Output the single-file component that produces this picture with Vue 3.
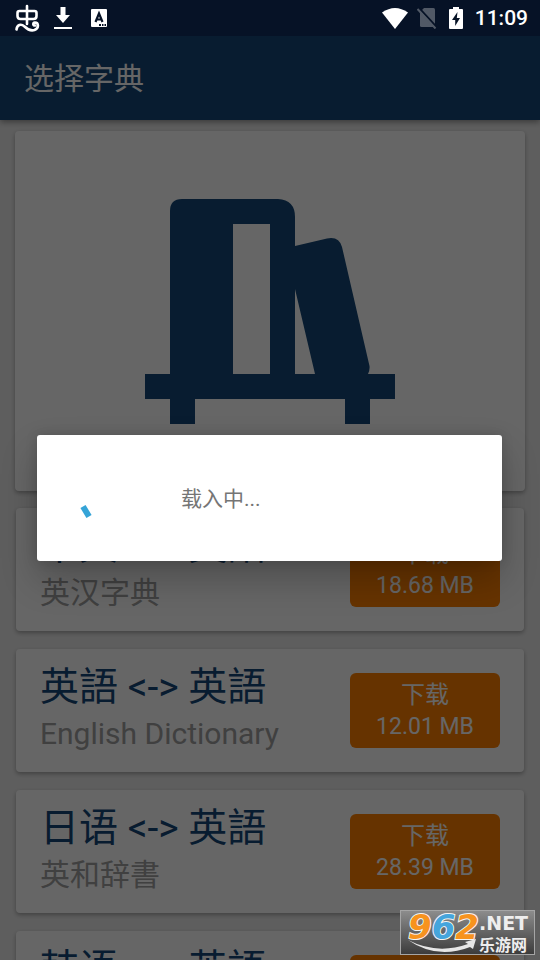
<script setup>
const dictionaries = [
  { pair: '中文 <-> 英語', name: '英汉字典', size: '18.68 MB' },
  { pair: '英語 <-> 英語', name: 'English Dictionary', size: '12.01 MB' },
  { pair: '日语 <-> 英語', name: '英和辞書', size: '28.39 MB' },
  { pair: '韩语 <-> 英語', name: '', size: '' }
]
</script>

<template>
  <div class="screen">
    <div class="status">
      <svg class="worm" width="26" height="28" viewBox="0 0 26 28" fill="none" stroke="#fff" stroke-width="2.6" stroke-linecap="round">
        <path d="M13 2V20M5.500 7H20.500Q22.500 7 22.500 9V12Q22.500 15 19.500 15H6.500Q3.500 15 3.500 12V9Q3.500 7 5.500 7Z" />
        <path d="M2.500 25.500C3 20.500 7 19.500 10.500 22.500C14 26 17 27 20.500 26C25.500 24 24.500 18.500 21 18.500C18.500 18.800 19 22 21 21.500" />
      </svg>
      <svg class="down" width="18" height="24" viewBox="0 0 18 24" fill="#fff">
        <path d="M6.500 1H11.500V9H16L9 17L2 9H6.500ZM0 21H18V23H0Z" />
      </svg>
      <svg class="lang" width="16" height="18" viewBox="0 0 16 18">
        <rect width="16" height="18" rx="1" fill="#fff" />
        <path d="M4.500 13L8 4.500L11.500 13M6 10.500H10" fill="none" stroke="#061226" stroke-width="2.200" />
        <path d="M8 15H10V17H8ZM11 15H12.500V17H11ZM13.500 15H15V17H13.500Z" fill="#061226" />
      </svg>
      <span class="grow"></span>
      <svg class="wifi" width="26" height="21" viewBox="0 0 26 21" fill="#fff">
        <path d="M0 4.500Q13 -4.500 26 4.500L13 21Z" />
      </svg>
      <svg class="sim" width="20" height="22" viewBox="0 0 20 22">
        <path d="M7 1H16.500Q18 1 18 2.500V18.500Q18 20 16.500 20H4.500Q3 20 3 18.500V5Z" fill="#515966" />
        <path d="M2 1L20 20.500" stroke="#061226" stroke-width="2" />
        <path d="M0.500 2L18.500 21.500" stroke="#515966" stroke-width="2" />
      </svg>
      <svg class="battery" width="14" height="22" viewBox="0 0 14 22">
        <path d="M4 0H10V2H13Q14 2 14 3V21Q14 22 13 22H1Q0 22 0 21V3Q0 2 1 2H4Z" fill="#fff" />
        <path d="M8.500 5L3 13H6.200V19L11 11H7.800Z" fill="#061226" />
      </svg>
      <span class="clock">11:09</span>
    </div>

    <header class="bar"><h1>选择字典</h1></header>

    <main class="content">
      <section class="hero">
        <svg width="250" height="225" viewBox="0 0 250 225" fill="#144878" fill-rule="evenodd">
          <path d="M25 175V12Q25 0 37 0H133Q150 1 150 18V47L182 39.500Q194 37 197 48L224.500 167Q225 171 223 175H250V200H225V225H200V200H50V225H25V200H0V175ZM88 25V175H125V25ZM150 90V175H170Z" />
        </svg>
      </section>
      <article v-for="d in dictionaries" :key="d.pair" class="row">
        <div class="info">
          <h2>{{ d.pair }}</h2>
          <p>{{ d.name }}</p>
        </div>
        <button type="button" :aria-label="d.pair">
          <template v-if="d.size"><span>下载</span><span class="size">{{ d.size }}</span></template>
        </button>
      </article>
    </main>

    <div class="overlay">
      <div class="dialog" role="dialog">
        <svg width="72" height="72" viewBox="0 0 72 72" fill="none">
          <path d="M13 44.500L19 54.500" stroke="#35a4d7" stroke-width="6" />
        </svg>
        <p>载入中...</p>
      </div>
    </div>

    <div class="mark">
      <div class="digits"><span>9</span><span class="blue">6</span><span>2</span></div>
      <div class="site"><span class="net">.NET</span><span class="cn">乐游网</span></div>
      <svg class="swoosh" width="70" height="14" viewBox="0 0 70 14">
        <path d="M0 1Q29 16 60 5L57 3L68 0L65 10L62 8Q29 21 0 1Z" fill="#e6e6e6" />
      </svg>
    </div>
  </div>
</template>

<style>
body {
  margin: 0;
  background: #ebebeb;
}
</style>

<style scoped>
.screen {
  position: relative;
  display: flex;
  flex-direction: column;
  height: 100vh;
  overflow: hidden;
  background: #ebebeb;
  font-family: Roboto, "Noto Sans CJK SC", sans-serif;
}
h1, h2, p {
  margin: 0;
  font-weight: 400;
}
.status {
  position: relative;
  z-index: 3;
  display: flex;
  flex: none;
  align-items: center;
  box-sizing: border-box;
  height: 36px;
  padding: 0 12px 0 14px;
  background: #061226;
}
.down { margin-left: 14px; }
.lang { margin-left: 19px; }
.grow { flex: 1; }
.sim { margin-left: 9px; }
.battery { margin-left: 12px; }
.clock {
  margin-left: 12px;
  color: #fff;
  font-size: 21px;
  font-weight: 500;
}
.bar {
  z-index: 1;
  display: flex;
  flex: none;
  align-items: center;
  box-sizing: border-box;
  height: 84px;
  padding: 0 24px 4px;
  background: #144878;
  box-shadow: 0 2px 6px rgba(0, 0, 0, 0.4);
}
h1 {
  color: #fff;
  font-size: 30px;
}
.content {
  display: flex;
  flex: 1;
  flex-direction: column;
  gap: 18px;
  min-height: 0;
  padding: 11px 16px 0;
}
.hero, .row {
  flex: none;
  border-radius: 4px;
  background: #fff;
  box-shadow: 0 2px 4px rgba(0, 0, 0, 0.3);
}
.hero {
  display: flex;
  align-items: center;
  justify-content: center;
  height: 360px;
  margin: 0 -1px -1px;
}
.row {
  display: flex;
  align-items: center;
  justify-content: space-between;
  box-sizing: border-box;
  height: 123px;
  padding: 0 24px;
}
.info { padding-bottom: 4px; }
h2 {
  color: #144878;
  font-size: 39px;
  line-height: 50px;
}
.info p {
  min-height: 44px;
  color: #a0a0a0;
  font-size: 30px;
  line-height: 44px;
}
button {
  display: flex;
  flex-direction: column;
  align-items: center;
  justify-content: center;
  width: 150px;
  height: 75px;
  padding: 0;
  border: 0;
  border-radius: 6px;
  background: #ff8000;
  color: #fff;
  font-family: inherit;
  font-size: 24px;
  line-height: 31px;
}
.size { font-size: 23px; }
.overlay {
  position: absolute;
  inset: 36px 0 0;
  z-index: 2;
  display: flex;
  align-items: center;
  padding: 0 38px 0 37px;
  background: rgba(0, 0, 0, 0.6);
}
.dialog {
  display: flex;
  flex: 1;
  align-items: center;
  gap: 39px;
  padding: 27px 33px;
  border-radius: 3px;
  background: #fff;
  box-shadow: 0 18px 36px rgba(0, 0, 0, 0.24), 0 0 12px rgba(0, 0, 0, 0.15);
}
.dialog p {
  padding-bottom: 2px;
  color: #757575;
  font-size: 21px;
}
.mark {
  position: absolute;
  right: 5px;
  bottom: 5px;
  z-index: 4;
  display: flex;
  box-sizing: border-box;
  width: 135px;
  height: 45px;
  padding-left: 7px;
  border: 1px solid #a5a5a5;
  background: linear-gradient(#8c8c8c, #3c3c3c);
  font-family: "DejaVu Sans", "Noto Sans CJK SC", sans-serif;
  font-weight: 700;
}
.digits {
  color: #f7931e;
  font-size: 34px;
  font-style: italic;
  line-height: 32px;
  -webkit-text-stroke: 2px #f4f4f4;
  paint-order: stroke fill;
}
.blue { color: #45a5dc; }
.site {
  display: flex;
  flex-direction: column;
  color: #eee;
  white-space: nowrap;
}
.net {
  font-size: 19px;
  line-height: 25px;
}
.cn {
  font-family: "Noto Sans CJK SC", sans-serif;
  font-size: 16px;
  line-height: 16px;
}
.swoosh {
  position: absolute;
  bottom: 1px;
  left: 7px;
}
</style>
